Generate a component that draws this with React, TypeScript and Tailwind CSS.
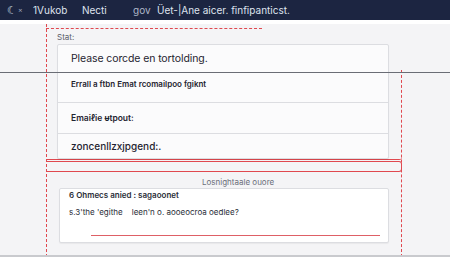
import React from 'react';

const FONT = { fontFamily: 'Inter, "Open Sans", "Liberation Sans", sans-serif' };

export default function App() {
  return (
    <div className="relative w-[450px] h-[257px] overflow-hidden bg-[#f4f4f6]" style={FONT}>
      {/* Top bar */}
      <div className="h-5 bg-[#1c2541] flex items-center text-[10px] text-[#dfe3ee] pl-[7px]">
        <span className="text-[11px] w-[11px] leading-none">☾</span>
        <span className="text-[7px] w-[15px] text-[#9aa3b8]">×</span>
        <span className="w-[49px]">1Vukob</span>
        <span className="w-[51px]">Necti</span>
        <span className="w-[24px] text-[#aeb5c7]">gov</span>
        <span>Üet-|Ane aicer. finfipanticst.</span>
      </div>
      <div className="h-1 bg-white" />

      {/* Main column */}
      <div className="ml-[46px] mr-[48px] h-[233px] border-l border-dashed border-[#e0484f] pt-1 flex flex-col">
        <div className="border-b border-[#e0484f] rounded-br-[3px] pl-[10px] pr-[13px] pt-[3px]">
          <div className="text-[8px] text-[#5b5f6a] h-[13px] leading-[13px]">Stat:</div>
          <div className="bg-[#fbfbfc] border border-[#dcdde1] rounded-[2px] shadow-[0_1px_1px_rgba(0,0,0,0.06)]">
            <div className="h-[57px] pl-[13px] pt-[6px]">
              <div className="text-[10.5px] tracking-[-0.1px] text-[#1f2430] leading-[16px]">Please corcde en tortolding.</div>
              <div className="text-[8px] font-semibold text-[#1f2430] mt-[11px]">Errall a ftbn Emat rcomailpoo fgiknt</div>
            </div>
            <div className="h-[31px] border-t border-[#dcdde1] pl-[13px] flex items-center text-[8.5px] font-semibold text-[#1f2430]">
              Emaiℓie ᵾtpout:
            </div>
            <div className="h-[25px] border-t border-[#dcdde1] pl-[13px] flex items-center text-[10px] font-medium text-[#1f2430]">
              zoncenllzxjpgend:.
            </div>
          </div>
        </div>
        <div className="mt-[1px] h-[11px] border border-[#e0484f] rounded-[3px] border-l-0 rounded-l-none" />
        <div className="text-[8px] text-[#6b6f7a] pl-[155px] mt-[5px] leading-[10px]">Losnightaale ouore</div>
        <div className="ml-[12px] mr-[13px] mt-[1px] h-[55px] bg-white border border-[#dcdde1] rounded-[2px] shadow-[0_1px_1px_rgba(0,0,0,0.05)] pl-[9px] relative">
          <div className="text-[8px] font-semibold text-[#2a2e38] leading-[12px]">6 Ohmecs anied : sagaoonet</div>
          <div className="text-[8px] text-[#2a2e38] mt-[5px] leading-[12px]">s.3'the 'egithe&nbsp;&nbsp;&nbsp;&nbsp;leen'n o. aooeocroa oedlee?</div>
          <div className="absolute left-[31px] right-[8px] bottom-[6px] h-px bg-[#de6066]" />
        </div>
      </div>

      {/* Right red dashed rail */}
      <div className="absolute left-[401px] top-[70px] h-[187px] border-l border-dashed border-[#e0484f]" />
      {/* Top dashed rule */}
      <div className="absolute left-[46px] top-[28px] w-[216px] border-t border-dashed border-[#e0484f]" />
      {/* Horizontal guide line */}
      <div className="absolute left-0 right-0 top-[72px] h-px bg-[#6a6d75]" />
      {/* Bottom line */}
      <div className="absolute left-0 right-0 top-[255px] h-[2px] bg-[#c9cace]" />
    </div>
  );
}
